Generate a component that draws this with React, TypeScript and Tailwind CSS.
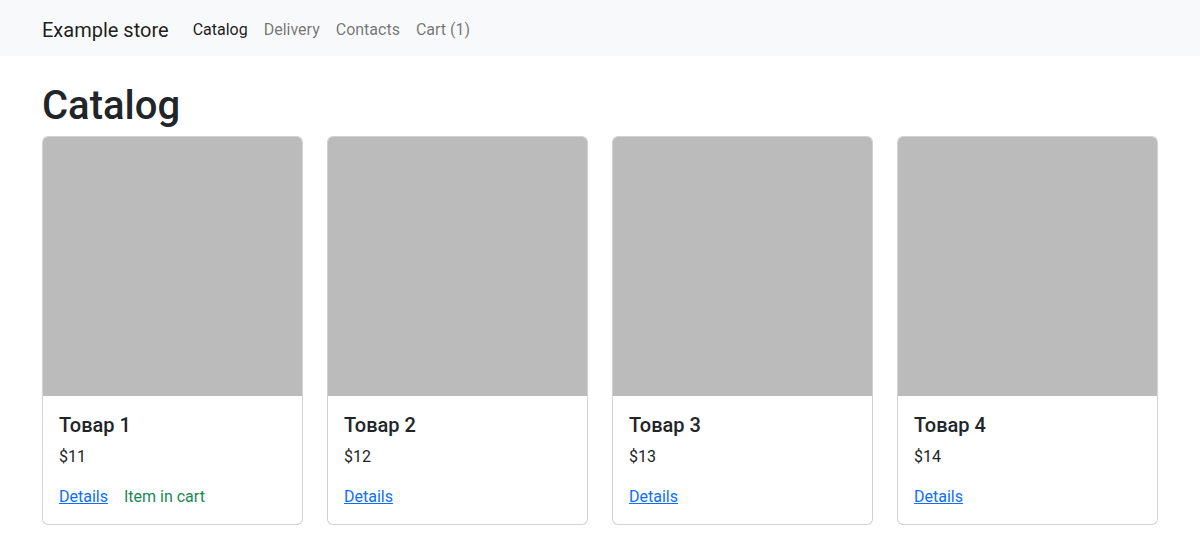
import React from "react";

const products = [
  { id: 1, name: "Товар 1", price: 11, inCart: true },
  { id: 2, name: "Товар 2", price: 12, inCart: false },
  { id: 3, name: "Товар 3", price: 13, inCart: false },
  { id: 4, name: "Товар 4", price: 14, inCart: false },
];

const navLinks = [
  { label: "Catalog", active: true },
  { label: "Delivery", active: false },
  { label: "Contacts", active: false },
  { label: "Cart (1)", active: false },
];

const font = { fontFamily: 'Roboto, "Noto Sans", sans-serif' };

export default function App() {
  return (
    <div className="min-h-screen bg-white text-[#212529]" style={font}>
      {/* Navbar */}
      <nav className="bg-[#f8f9fa] py-2">
        <div className="mx-auto flex max-w-[1140px] items-center px-3">
          <a className="mr-4 pt-[7px] pb-[3px] text-[20px] leading-[30px] text-black/90">
            Example store
          </a>
          <div className="flex items-center">
            {navLinks.map((link) => (
              <a
                key={link.label}
                className={`px-2 pt-[10px] pb-[6px] text-base leading-6 ${
                  link.active ? "text-black/90" : "text-black/55"
                }`}
              >
                {link.label}
              </a>
            ))}
          </div>
        </div>
      </nav>

      {/* Content */}
      <main className="mx-auto max-w-[1140px] px-3 pt-[26px]">
        <h1 className="mb-[6px] text-[40px] font-medium leading-[48px]">Catalog</h1>
        <div className="grid grid-cols-4 gap-6">
          {products.map((p) => (
            <div
              key={p.id}
              className="flex flex-col overflow-hidden rounded-md border border-black/[0.175] bg-white"
            >
              <div className="h-[259px] bg-[#bbbbbb]" />
              <div className="px-4 pt-[17px] pb-[15px]">
                <h5 className="mb-2 text-[20px] font-medium leading-6">{p.name}</h5>
                <p className="mb-4 text-base leading-6">${p.price}</p>
                <div className="flex items-center text-base leading-6">
                  <a className="text-[#0d6efd] underline">Details</a>
                  {p.inCart && <span className="ml-4 text-[#198754]">Item in cart</span>}
                </div>
              </div>
            </div>
          ))}
        </div>
      </main>
    </div>
  );
}
